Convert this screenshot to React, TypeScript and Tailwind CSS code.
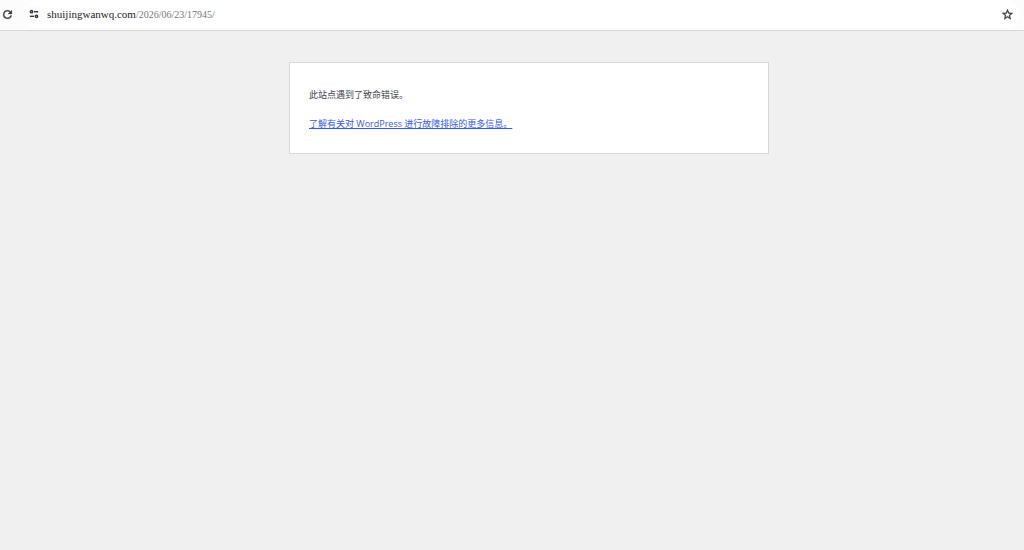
import React, { FC } from "react";

interface IconProps {
  className?: string;
}

const ReloadIcon: FC<IconProps> = ({ className }) => (
  <svg viewBox="0 0 24 24" fill="currentColor" stroke="currentColor" strokeWidth="0.6" className={className} aria-hidden="true">
    <path d="M17.65 6.35A7.96 7.96 0 0 0 12 4a8 8 0 1 0 7.73 10h-2.08A6 6 0 1 1 12 6c1.66 0 3.14.69 4.22 1.78L13 11h7V4l-2.35 2.35z" />
  </svg>
);

const SiteSettingsIcon: FC<IconProps> = ({ className }) => (
  <svg viewBox="0 0 24 24" fill="none" stroke="currentColor" strokeWidth="3.4" className={className} aria-hidden="true">
    <circle cx="6" cy="6.5" r="2.8" />
    <path d="M12 6.5h10" />
    <circle cx="18" cy="17.5" r="2.8" />
    <path d="M2 17.5h10" />
  </svg>
);

const StarIcon: FC<IconProps> = ({ className }) => (
  <svg viewBox="0 0 24 24" fill="currentColor" className={className} aria-hidden="true">
    <path
      stroke="currentColor"
      strokeWidth="0.6"
      d="M22 9.24l-7.19-.62L12 2 9.19 8.63 2 9.24l5.46 4.73L5.82 21 12 17.27 18.18 21l-1.63-7.03L22 9.24zM12 15.4l-3.76 2.27 1-4.28-3.32-2.88 4.38-.38L12 6.1l1.71 4.04 4.38.38-3.32 2.88 1 4.28L12 15.4z"
    />
  </svg>
);

/**
 * Browser toolbar with the address field
 */
const AddressBar: FC = () => {
  return (
    <header className="flex h-[31px] items-start border-b border-[#d5d6d7] bg-[#fcfcfc] pr-1">
      <button type="button" aria-label="Reload" className="flex h-7 w-6 items-center pl-px text-[#343638]">
        <ReloadIcon className="size-[13px]" />
      </button>
      <div className="flex h-7 flex-1 items-center rounded-full bg-white pr-1.5">
        <button
          type="button"
          aria-label="Site information"
          className="flex size-5 items-center justify-center rounded-full bg-[#fcfcfc] text-[#343638]"
        >
          <SiteSettingsIcon className="size-[10px]" />
        </button>
        <p className="flex-1 pl-[3px] font-['Liberation_Serif',serif] text-[11px] leading-4 text-[#202124]">
          shuijingwanwq.com
          <span className="text-[10px] text-[#75787b]">/2026/06/23/17945/</span>
        </p>
        <button type="button" aria-label="Bookmark this page" className="text-[#343638]">
          <StarIcon className="size-[13px]" />
        </button>
      </div>
    </header>
  );
};

const App: FC = () => {
  return (
    <div className="flex min-h-screen flex-col bg-[#f0f0f0]">
      <AddressBar />
      <main className="flex-1 pt-[31px] pl-[34px]">
        <div className="mx-auto max-w-[480px] border border-[#d5d8da] bg-white px-[19px] pt-[25px] pb-[22px] font-['Open_Sans','Noto_Sans_CJK_SC',sans-serif] text-[9px] leading-[14px] text-[#3c434a]">
          <p>此站点遇到了致命错误。</p>
          <p className="mt-[15px]">
            <a href="#troubleshooting" className="text-[#3858e9] underline">
              了解有关对 WordPress 进行故障排除的更多信息。
            </a>
          </p>
        </div>
      </main>
    </div>
  );
};

export default App;
